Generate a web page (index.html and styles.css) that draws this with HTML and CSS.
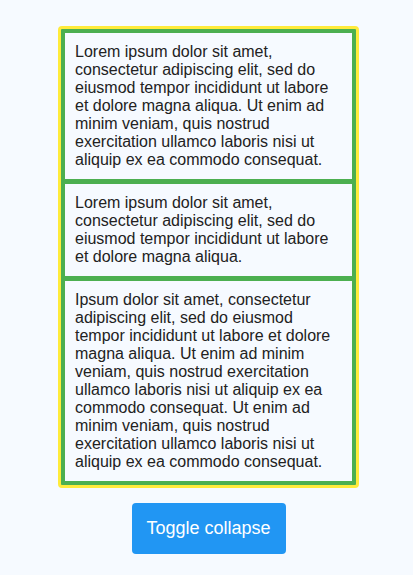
FILE: index.html
```html
<!DOCTYPE html>
<html lang="en">
<head>
<meta charset="utf-8">
<title>Collapse</title>
<link rel="stylesheet" href="styles.css">
</head>
<body>
<main class="page">
  <div class="stack">
    <div class="item">Lorem ipsum dolor sit amet, consectetur adipiscing elit, sed do eiusmod tempor incididunt ut labore et dolore magna aliqua. Ut enim ad minim veniam, quis nostrud exercitation ullamco laboris nisi ut aliquip ex ea commodo consequat.</div>
    <div class="item">Lorem ipsum dolor sit amet, consectetur adipiscing elit, sed do eiusmod tempor incididunt ut labore et dolore magna aliqua.</div>
    <div class="item">Ipsum dolor sit amet, consectetur adipiscing elit, sed do eiusmod tempor incididunt ut labore et dolore magna aliqua. Ut enim ad minim veniam, quis nostrud exercitation ullamco laboris nisi ut aliquip ex ea commodo consequat. Ut enim ad minim veniam, quis nostrud exercitation ullamco laboris nisi ut aliquip ex ea commodo consequat.</div>
  </div>
  <button class="toggle" type="button">Toggle collapse</button>
</main>
</body>
</html>
```

FILE: styles.css
```css
html, body {
  margin: 0;
  padding: 0;
  background: #f6faff;
}
body {
  font-family: "Liberation Sans", Arial, sans-serif;
  color: #222;
}
.page {
  display: flex;
  flex-direction: column;
  align-items: center;
  padding: 26px 0 0 4px;
  gap: 15px;
}
.stack {
  box-sizing: border-box;
  width: 301px;
  border: 3px solid #ffeb3b;
  border-radius: 4px;
  background: #4caf50;
  padding: 4px;
  display: flex;
  flex-direction: column;
  gap: 5px;
}
.item {
  background: #f6faff;
  padding: 10px;
  font-size: 16px;
  line-height: 18px;
}
.toggle {
  box-sizing: border-box;
  background: #2196f3;
  color: #fff;
  border: none;
  border-radius: 4px;
  font-family: "Liberation Sans", Arial, sans-serif;
  font-size: 18px;
  line-height: 21px;
  white-space: nowrap;
  padding: 0;
  width: 154px;
  height: 51px;
}
```
